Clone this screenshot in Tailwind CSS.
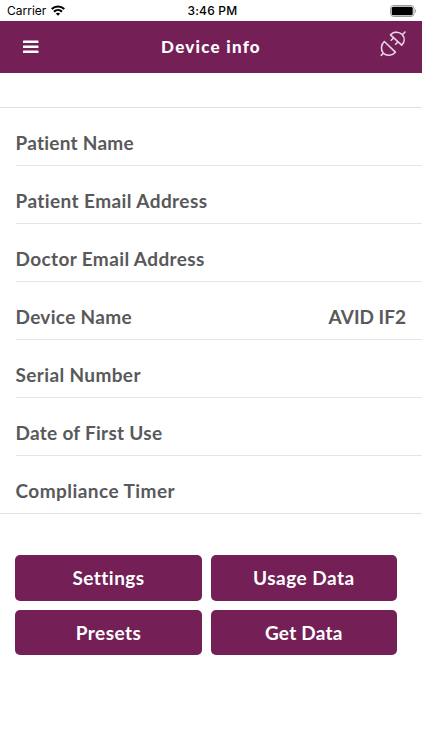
<!DOCTYPE html>
<html lang="en">
<head>
<meta charset="utf-8">
<title>Device info</title>
<script src="https://cdn.jsdelivr.net/npm/@tailwindcss/browser@4"></script>
</head>
<body class="bg-white w-[422px] h-[750px] overflow-hidden flex flex-col font-['Lato',sans-serif]">
<div class="h-[21px] shrink-0 grid grid-cols-3 items-center pl-[7px] pr-[5px] text-black font-['Inter',sans-serif] text-[12px] leading-[21px]">
  <div class="flex items-center gap-[5px]"><span>Carrier</span>
    <svg class="w-[14px] h-[11px]" viewBox="0 0 14 11" fill="none" stroke="#000" stroke-width="2.1"><path d="M.7 4C4.2.6 9.8.6 13.3 4M3 6.6c2.3-2.1 5.7-2.1 8 0"/><path d="M4.8 8.5c1.3-1.1 3.1-1.1 4.4 0L7 10.7z" fill="#000" stroke="none"/></svg>
  </div>
  <div class="text-center font-medium pl-px whitespace-nowrap tracking-[0.2px]">3:46 PM</div>
  <div class="flex justify-end items-center">
    <svg class="w-[27px] h-[12px]" viewBox="0 0 27 12"><rect x=".5" y=".5" width="23.5" height="11" rx="3" fill="#fff" stroke="#999"/><rect x="1.7" y="1.7" width="21" height="8.6" rx="1.6" fill="#000"/><path d="M25.2 4c1.3.5 1.3 3.5 0 4z" fill="#999"/></svg>
  </div>
</div>
<header class="h-[52px] shrink-0 bg-[#742056] flex items-center justify-between pl-[23px] pr-[15px] text-white">
  <svg class="w-[16px] h-[14px]" viewBox="0 0 16 14" fill="#fff"><rect x="0" y="0.5" width="15.5" height="2.6" rx=".5"/><rect x="0" y="5.5" width="15.5" height="2.6" rx=".5"/><rect x="0" y="10.5" width="15.5" height="2.6" rx=".5"/></svg>
  <h1 class="font-black text-[17px] leading-5 tracking-[1.25px] pl-[4px]">Device info</h1>
  <svg class="w-[28px] h-[28px] -mt-[6px]" viewBox="0 0 28 28" fill="none" stroke="#edd3e4" stroke-width="1.6" stroke-linecap="round" stroke-linejoin="round"><path d="M11.5 4.8L22.7 15.2C25.6 12.2 26 8 23.4 4.8C20.2 1.4 14.8 1.2 11.5 4.8ZM23.400 4.800L26 2M14.200 8.200L12.200 10.200M18.600 12.200L16.600 14.200M5.300 11.500L16.400 22.200C13.200 25.800 7.600 26.300 4.400 23.200C1.400 20 1.900 14.600 5.300 11.500ZM4.400 23.200L2.200 25.300"/></svg>
</header>
<main>
  <div class="h-[35px] border-b border-[#e2e2e2]"></div>
  <ul class="border-b border-[#e2e2e2] text-[#58595b] font-bold text-[19px] leading-6">
    <li class="ml-[15.500px] pr-4 h-[58px] pt-[23px] flex justify-between border-b border-[#e6e6e6]"><span class="tracking-[0.25px]">Patient Name</span></li>
    <li class="ml-[15.500px] pr-4 h-[58px] pt-[23px] flex justify-between border-b border-[#e6e6e6]"><span class="tracking-[0.41px]">Patient Email Address</span></li>
    <li class="ml-[15.500px] pr-4 h-[58px] pt-[23px] flex justify-between border-b border-[#e6e6e6]"><span class="tracking-[0.38px]">Doctor Email Address</span></li>
    <li class="ml-[15.500px] pr-4 h-[58px] pt-[23px] flex justify-between border-b border-[#e6e6e6]"><span class="tracking-[0.32px]">Device Name</span><span>AVID IF2</span></li>
    <li class="ml-[15.500px] pr-4 h-[58px] pt-[23px] flex justify-between border-b border-[#e6e6e6]"><span class="tracking-[0.37px]">Serial Number</span></li>
    <li class="ml-[15.500px] pr-4 h-[58px] pt-[23px] flex justify-between border-b border-[#e6e6e6]"><span class="tracking-[0.28px]">Date of First Use</span></li>
    <li class="ml-[15.500px] pr-4 h-[57px] pt-[23px] flex justify-between"><span class="tracking-[0.45px]">Compliance Timer</span></li>
  </ul>
  <div class="grid grid-cols-2 gap-[9px] mt-[41.4px] ml-[15.4px] w-[381.6px] text-white font-bold text-[19px] leading-6">
    <button class="h-[45.5px] rounded-[5px] bg-[#742056] tracking-[0.45px]">Settings</button>
    <button class="h-[45.5px] rounded-[5px] bg-[#742056] tracking-[0.5px]">Usage Data</button>
    <button class="h-[45.5px] rounded-[5px] bg-[#742056] tracking-[0.45px]">Presets</button>
    <button class="h-[45.5px] rounded-[5px] bg-[#742056] tracking-[0.25px]">Get Data</button>
  </div>
</main>
</body>
</html>
